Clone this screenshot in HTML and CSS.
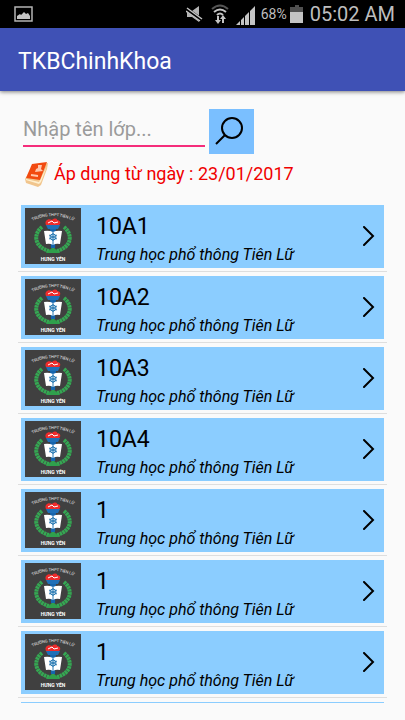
FILE: index.html
```html
<!DOCTYPE html>
<html lang="vi">
<head>
<meta charset="utf-8">
<meta name="viewport" content="width=device-width, initial-scale=1">
<title>TKBChinhKhoa</title>
<link rel="stylesheet" href="styles.css">
</head>
<body>
<svg class="defs" aria-hidden="true">
  <symbol id="crest" viewBox="0 0 56 56">
    <rect width="56" height="56" fill="#404040"/>
    <path id="arc" d="M5 14Q28 2 51 14" fill="none"/>
    <text font-size="4" fill="#eee" text-anchor="middle"><textPath href="#arc" startOffset="50%">TRƯỜNG THPT TIÊN LỮ</textPath></text>
    <g fill="none" stroke="#35a853" stroke-width="4" stroke-dasharray="2.500 .5">
      <path d="M17 19C8 26 9 39 24 43"/>
      <path d="M39 19C48 26 47 39 32 43"/>
    </g>
    <path d="M21 45l7-6 7 6z" fill="#2fa04c"/>
    <path d="M25 20h6l-1 20h-4z" fill="#1565ad"/>
    <path d="M21 17h14l-2 4h-10z" fill="#1f70b8"/>
    <path d="M21 17c-2-4 2-7 6-5 3-3 6-1 5 0 4 0 4 4 2 5z" fill="#ee2b2b"/>
    <path d="M23 15l4-2 2 2 4-1" fill="none" stroke="#fff" stroke-width="1"/>
    <path d="M19 23q5-1 9 1 4-2 9-1l-2 13q-4-1-7 1-3-2-7-1z" fill="#fff"/>
    <path d="M28 24v13" stroke="#2b7ab3" stroke-width="1"/>
    <circle cx="28" cy="29" r="3" fill="#d5e9f5" stroke="#2b7ab3" stroke-width="1"/>
    <path d="M24 27l8 4m0-4l-8 4M28 25v8" stroke="#2b7ab3" stroke-width="1"/>
    <text x="28" y="53" font-size="5" font-weight="700" fill="#fff" text-anchor="middle">HƯNG YÊN</text>
  </symbol>
  <symbol id="chevron" viewBox="0 0 12 20"><path d="M1 1l9 9-9 9" fill="none" stroke="#000" stroke-width="2" stroke-linecap="round"/></symbol>
</svg>
<div class="status">
  <svg class="picture" viewBox="0 0 19 16" aria-hidden="true"><path d="M1 1h17v14H1z" fill="none" stroke="#b4b4b4" stroke-width="1.500"/><path d="M3 13v-3l3-2 1 1 3-3 2 2 2-1 2 3v3z" fill="#c4c4c4"/></svg>
  <svg class="mute" viewBox="0 0 17 17" aria-hidden="true"><path d="M1 5h5l7-5v16l-7-5H1z" fill="#b4b4b4"/><path d="M0 3l17 12" stroke="#000" stroke-width="4"/><path d="M1 2l15 11M0 5l14 10" stroke="#c4c4c4" stroke-width="1.500"/></svg>
  <svg class="wifi" viewBox="0 0 18 20" aria-hidden="true"><g fill="none" stroke-width="2"><path d="M1 5q8-7 16 0" stroke="#555"/><path d="M3 8q6-5 12 0M6 11q3-3 6 0" stroke="#c4c4c4"/></g><path d="M6 12v4H4l3 4 3-4H8v-4zM11 19v-4H9l3-4 3 4h-2v4z" fill="#c4c4c4"/></svg>
  <svg class="signal" viewBox="0 0 19 19" aria-hidden="true"><path d="M0 19l4-4v4zM5 14l3-3v8H5zM9 10l4-4v13H9zM14 5l5-5v19h-5z" fill="#c4c4c4"/></svg>
  <span class="percent">68%</span>
  <svg class="battery" viewBox="0 0 13 18" aria-hidden="true"><path d="M5 0h4v2h4v6H0V2h5z" fill="#505050"/><path d="M0 7h13v11H0z" fill="#c4c4c4"/></svg>
  <time class="clock">05:02 AM</time>
</div>
<header class="appbar"><h1>TKBChinhKhoa</h1></header>
<main class="content">
  <form class="search">
    <input type="text" placeholder="Nhập tên lớp..." aria-label="Nhập tên lớp">
    <button type="button" aria-label="Tìm"><svg viewBox="0 0 45 45" aria-hidden="true"><circle cx="23" cy="19" r="10"/><path d="M16 26l-9 9"/></svg></button>
  </form>
  <p class="notice">
    <svg viewBox="0 0 26 26" aria-hidden="true"><path d="M1 18L8 6 24 2l-1 6-6 16-3 2-12-4z" fill="#f1c58d"/><path d="M2 18l13 3 8-16-6 16-2 2-13-4z" fill="#fff0ce"/><path d="M8 3l15-2-7 18-14-2z" fill="#f24a10"/><path d="M14 4h4l-1 4 2 2-8 1 1-3 2-1z" fill="#ffc7ad"/><path d="M7 14l7 1" stroke="#ffc7ad" stroke-width="2"/></svg>
    <span>Áp dụng từ ngày : 23/01/2017</span>
  </p>
  <ul class="classes">
    <li><a href="#"><svg class="crest"><use href="#crest"/></svg><span class="label"><strong>10A1</strong><em>Trung học phổ thông Tiên Lữ</em></span><svg class="chevron"><use href="#chevron"/></svg></a></li>
    <li><a href="#"><svg class="crest"><use href="#crest"/></svg><span class="label"><strong>10A2</strong><em>Trung học phổ thông Tiên Lữ</em></span><svg class="chevron"><use href="#chevron"/></svg></a></li>
    <li><a href="#"><svg class="crest"><use href="#crest"/></svg><span class="label"><strong>10A3</strong><em>Trung học phổ thông Tiên Lữ</em></span><svg class="chevron"><use href="#chevron"/></svg></a></li>
    <li><a href="#"><svg class="crest"><use href="#crest"/></svg><span class="label"><strong>10A4</strong><em>Trung học phổ thông Tiên Lữ</em></span><svg class="chevron"><use href="#chevron"/></svg></a></li>
    <li><a href="#"><svg class="crest"><use href="#crest"/></svg><span class="label"><strong>1</strong><em>Trung học phổ thông Tiên Lữ</em></span><svg class="chevron"><use href="#chevron"/></svg></a></li>
    <li><a href="#"><svg class="crest"><use href="#crest"/></svg><span class="label"><strong>1</strong><em>Trung học phổ thông Tiên Lữ</em></span><svg class="chevron"><use href="#chevron"/></svg></a></li>
    <li><a href="#"><svg class="crest"><use href="#crest"/></svg><span class="label"><strong>1</strong><em>Trung học phổ thông Tiên Lữ</em></span><svg class="chevron"><use href="#chevron"/></svg></a></li>
    <li><a href="#" aria-label="Lớp tiếp theo"></a></li>
  </ul>
</main>
</body>
</html>
```
FILE: styles.css
```css
* { box-sizing: border-box; }
body {
  margin: 0;
  height: 100vh;
  display: flex;
  flex-direction: column;
  overflow: hidden;
  background: #fafafa;
  color: #000;
  font-family: Roboto, "Noto Sans", sans-serif;
}
.defs { position: absolute; width: 0; height: 0; }
svg { display: block; flex: none; }
.status {
  flex: none;
  display: flex;
  align-items: center;
  height: 28px;
  padding: 0 10px 0 14px;
  background: #000;
  color: #bebebe;
}
.picture { width: 19px; height: 16px; }
.mute { width: 17px; height: 17px; margin-left: auto; }
.wifi { width: 18px; height: 20px; margin-left: 8px; }
.signal { width: 19px; height: 19px; margin: 2px 6px 0 7px; }
.percent { font-size: 14px; line-height: 20px; }
.battery { width: 13px; height: 18px; margin: 0 7px 0 3px; }
.clock { font-size: 20px; line-height: 28px; }
.appbar {
  flex: none;
  display: flex;
  align-items: center;
  height: 63px;
  padding: 4px 18px 0;
  background: #3f51b5;
  box-shadow: 0 1px 4px rgba(0, 0, 0, .5);
  color: #fff;
}
h1 { margin: 0; font-size: 23px; line-height: 32px; font-weight: 400; }
.content {
  flex: 1;
  min-height: 0;
  display: flex;
  flex-direction: column;
  padding: 18px 18px 17px;
}
.search { flex: none; display: flex; gap: 4px; padding-left: 5px; }
.search input {
  width: 50%;
  height: 38px;
  padding: 4px 0 0;
  border: 0;
  border-bottom: 2px solid #f52d7b;
  border-radius: 0;
  outline: 0;
  background: none;
  font: 20px/28px Roboto, "Noto Sans", sans-serif;
}
.search input::placeholder { color: #9b9b9b; opacity: 1; }
.search button { width: 45px; height: 45px; padding: 0; border: 0; background: #7abfff; }
.search button svg { width: 45px; height: 45px; fill: none; stroke: #000; stroke-width: 2; }
.notice {
  flex: none;
  display: flex;
  align-items: center;
  gap: 4px;
  height: 40px;
  margin: 0;
  padding-left: 6px;
  color: #f00000;
  font-size: 18px;
  line-height: 24px;
}
.notice svg { width: 26px; height: 26px; }
.classes {
  flex: 1;
  min-height: 0;
  margin: 8px 0 0;
  padding: 3px 0 0;
  overflow: hidden;
  list-style: none;
}
.classes li { margin-bottom: 4px; padding: 0 3px 3px; border-bottom: 1px solid #dedede; }
.classes a {
  display: flex;
  align-items: center;
  height: 63px;
  padding: 0 9px 1px 4px;
  background: #8bcdff;
  color: #000;
  text-decoration: none;
}
.crest { width: 56px; height: 56px; }
.label { flex: 1; padding: 6px 0 0 15px; }
.label strong, .label em { display: block; white-space: nowrap; }
.label strong { font-size: 23px; line-height: 32px; font-weight: 400; }
.label em { font-size: 16px; line-height: 24px; }
.chevron { width: 12px; height: 20px; }
```
